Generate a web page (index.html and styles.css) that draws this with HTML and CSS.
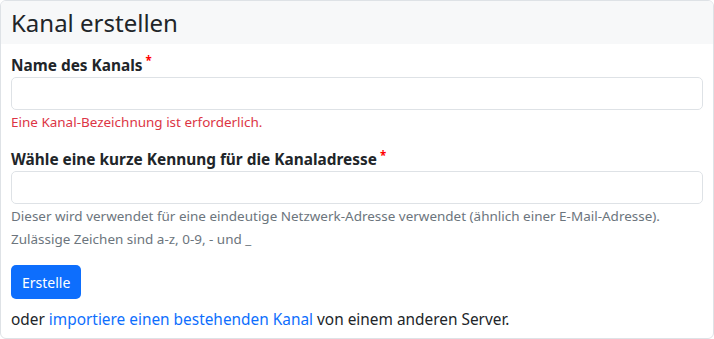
FILE: index.html
```html
<!DOCTYPE html>
<html>
<head>
  <meta charset="utf-8">
  <title>Kanal erstellen</title>
  <link rel="stylesheet" href="styles.css">
</head>
<body>
  <div class="card">
    <div class="card-header">
      <h2>Kanal erstellen</h2>
    </div>
    <div class="card-body">
      <form onSubmit="return false">
        <div class="form-group">
          <label for="id_name">Name des Kanals<sup class="required">*</sup></label>
          <input type="text" id="id_name" class="form-control">
          <small class="form-text error">Eine Kanal-Bezeichnung ist erforderlich.</small>
        </div>

        <div class="form-group">
          <label for="id_nickname">Wähle eine kurze Kennung für die Kanaladresse<sup class="required">*</sup></label>
          <input type="text" id="id_nickname" class="form-control">
          <small class="form-text">Dieser wird verwendet für eine eindeutige Netzwerk-Adresse verwendet (ähnlich einer E-Mail-Adresse).</small>
          <small class="form-text">Zulässige Zeichen sind a-z, 0-9, - und _</small>
        </div>

        <button type="submit" class="btn btn-primary">Erstelle</button>
      </form>

      <p class="import">oder <a href="#">importiere einen bestehenden Kanal</a> von einem anderen Server.</p>
    </div>
  </div>
</body>
</html>
```

FILE: styles.css
```css
body {
  margin: 0;
  font-family: "Noto Sans", sans-serif;
  font-size: 15.4px;
  line-height: 1.5;
  color: #212529;
  background: #fff;
}

.card {
  border: 1px solid #dee2e6;
  border-radius: 6px;
  overflow: hidden;
  height: 337px;
  width: 712px;
}

.card-header {
  background: #f7f8f9;
  height: 43px;
  padding: 0 10px;
  display: flex;
  align-items: center;
}

.card-header h2 {
  margin: 0;
  font-size: 24px;
  font-weight: 400;
}

.card-body {
  padding: 10px 10px;
}

.form-group {
  margin-bottom: 16px;
}

label {
  display: block;
  font-weight: 700;
}

.required {
  position: relative;
  top: -0.5em;
  vertical-align: baseline;
  line-height: 0;
  font-size: 0.75em;
  color: #f00;
  margin-left: 3px;
}

.form-control {
  display: block;
  box-sizing: border-box;
  width: 100%;
  height: 33px;
  border: 1px solid #dee2e6;
  border-radius: 5px;
  padding: 6px 10px;
  font-size: 15.4px;
}

.form-text {
  display: block;
  font-size: 13.475px;
  color: #6c757d;
  margin-top: 2px;
}

.form-text.error {
  color: #dc3545;
}

.btn {
  font-family: inherit;
  font-size: 14px;
  line-height: 1.5;
  border: none;
  border-radius: 5px;
  padding: 7px 11px 6px;
  cursor: pointer;
}

.btn-primary {
  background: #0d6efd;
  color: #fff;
}

.import {
  margin: 9px 0 0;
}

.import a {
  color: #0d6efd;
  text-decoration: none;
}
```
